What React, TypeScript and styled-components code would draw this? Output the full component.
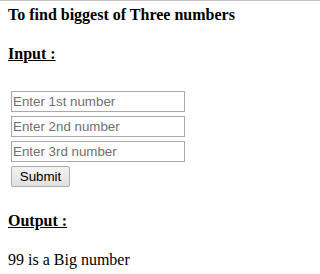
import { createGlobalStyle, styled } from 'styled-components';

const GlobalStyle = createGlobalStyle`
  html {
    border-top: 1px solid #c4c4c4;
    background: #fff;
  }
  body {
    margin: 0;
    font-family: 'Liberation Serif', 'Times New Roman', serif;
    font-size: 16px;
    color: #000;
  }
`;

const Page = styled.div`
  padding: 5px 8px 8px;
`;

const Title = styled.h4`
  margin: 0;
  font-size: 16px;
  font-weight: bold;
  white-space: nowrap;
`;

const Heading = styled.h4`
  margin: 21.28px 0;
  font-size: 16px;
  font-weight: bold;
  text-decoration: underline;
`;

const Form = styled.form`
  display: flex;
  flex-direction: column;
  align-items: flex-start;
  gap: 4px;
  padding: 6px 0 4px 3px;
`;

const NumberInput = styled.input`
  box-sizing: border-box;
  width: 174px;
  height: 21px;
  margin: 0;
  padding: 1px 1px;
  border: 1px solid #a9a9a9;
  font-family: 'Liberation Sans', Arial, sans-serif;
  font-size: 13.33px;
  color: #000;
  outline: none;

  &::placeholder {
    color: #6f6f6f;
  }
`;

const SubmitButton = styled.button`
  box-sizing: border-box;
  width: 59px;
  height: 21px;
  margin: 0;
  padding: 0;
  border: 1px solid #adadad;
  border-radius: 2px;
  background: linear-gradient(#f3f3f3, #e0e0e0);
  font-family: 'Liberation Sans', Arial, sans-serif;
  font-size: 13.33px;
  color: #000;
`;

const Result = styled.p`
  margin: 0;
`;

export default function App() {
  return (
    <>
      <GlobalStyle />
      <Page>
        <Title>To find biggest of Three numbers</Title>
        <Heading>Input :</Heading>
        <Form onSubmit={(e) => e.preventDefault()}>
          <NumberInput type='text' placeholder='Enter 1st number' />
          <NumberInput type='text' placeholder='Enter 2nd number' />
          <NumberInput type='text' placeholder='Enter 3rd number' />
          <SubmitButton type='submit'>Submit</SubmitButton>
        </Form>
        <Heading>Output :</Heading>
        <Result>99 is a Big number</Result>
      </Page>
    </>
  );
}
